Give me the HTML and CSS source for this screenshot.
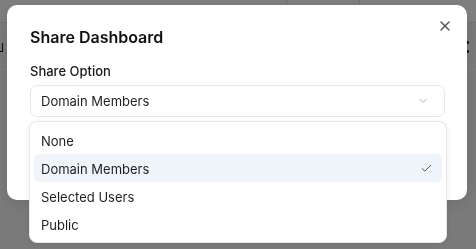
FILE: index.html
```html
<!DOCTYPE html>
<html lang="en">
<head>
    <meta charset="UTF-8">
    <meta name="viewport" content="width=device-width, initial-scale=1.0">
    <title>Share Dashboard</title>
    <link rel="stylesheet" href="styles.css">
</head>
<body>
    <!-- page behind the dialog -->
    <div class="page">
        <div class="page-header">
            <div class="page-cell wide"></div>
            <div class="page-cell"></div>
            <div class="page-cell"></div>
        </div>
        <div class="page-row">
            <span class="page-icon"></span>
            <span class="page-dots"><i></i><i></i></span>
        </div>
    </div>

    <div class="overlay">
        <div class="modal">
            <button class="close-btn" aria-label="Close">
                <svg width="16" height="16" viewBox="0 0 24 24" fill="none" stroke="currentColor" stroke-width="2" stroke-linecap="round" stroke-linejoin="round">
                    <path d="M18 6 6 18"/>
                    <path d="m6 6 12 12"/>
                </svg>
            </button>
            <h2 class="modal-title">Share Dashboard</h2>
            <label class="field-label">Share Option</label>
            <div class="select">
                <div class="select-trigger">
                    <span>Domain Members</span>
                    <svg class="chevron" width="12" height="12" viewBox="0 0 24 24" fill="none" stroke="currentColor" stroke-width="1.8" stroke-linecap="round" stroke-linejoin="round">
                        <path d="m6 9 6 6 6-6"/>
                    </svg>
                </div>
                <ul class="select-menu">
                    <li class="select-item">None</li>
                    <li class="select-item selected">
                        Domain Members
                        <svg class="check" width="13" height="13" viewBox="0 0 24 24" fill="none" stroke="currentColor" stroke-width="1.8" stroke-linecap="round" stroke-linejoin="round">
                            <path d="M20 6 9 17l-5-5"/>
                        </svg>
                    </li>
                    <li class="select-item">Selected Users</li>
                    <li class="select-item">Public</li>
                </ul>
            </div>
        </div>
    </div>
</body>
</html>
```

FILE: styles.css
```css
*{
    box-sizing: border-box;
}

body{
    margin:0;
    padding:0;
    font-family: Inter, "Liberation Sans", sans-serif;
    color:#18181b;
    background:#f4f4f5;
    height:249px;
    overflow:hidden;
}

/* background page */
.page-header{
    display:flex;
    height:23px;
    background:#fff;
    border-bottom:1px solid #e4e4e7;
}

.page-cell{
    width:73px;
    border-left:1px solid #e4e4e7;
}

.page-cell.wide{
    width:286px;
    border-left:none;
}

.page-row{
    display:flex;
    justify-content: space-between;
    align-items: center;
    height:47px;
    border-bottom:1px solid #fff;
}

.page-icon{
    width:3px;
    height:9px;
    margin-top:2px;
    border-right:1.5px solid #111;
    border-bottom:1.5px solid #111;
}

.page-dots{
    display:flex;
    flex-direction: column;
    gap:6px;
    margin-right:7px;
    margin-top:2px;
}

.page-dots i{
    width:3px;
    height:3px;
    border-radius:50%;
    background:#111;
}

/* dialog */
.overlay{
    position:fixed;
    inset:0;
    background:rgba(0,0,0,.5);
    padding:5px 9px 0 7px;
}

.modal{
    position:relative;
    height:195px;
    background:#fff;
    border-radius:10px;
    padding:20px 22px 0 23px;
    box-shadow:0 4px 16px rgba(0,0,0,.1);
}

.close-btn{
    position:absolute;
    top:13px;
    right:14px;
    padding:0;
    border:none;
    background:transparent;
    color:#52525b;
    display:flex;
}

.modal-title{
    margin:0 0 12px;
    font-size:16px;
    line-height:24px;
    font-weight:600;
    color:#111;
}

.field-label{
    display:block;
    font-size:13px;
    line-height:20px;
    font-weight:500;
    margin-bottom:4px;
}

.select{
    position:relative;
}

.select-trigger{
    display:flex;
    justify-content: space-between;
    align-items: center;
    height:32px;
    padding:0 15px 0 10px;
    border:1px solid #e7e7ea;
    border-radius:7px;
    font-size:13px;
    color:#1f1f23;
}

.chevron{
    color:#a1a1aa;
}

.select-menu{
    position:absolute;
    top:36px;
    left:-1px;
    width:418px;
    margin:0;
    padding:4px;
    list-style:none;
    background:#fff;
    border:1px solid #e7e7ea;
    border-radius:8px;
    box-shadow:0 2px 6px rgba(0,0,0,.08);
}

.select-item{
    display:flex;
    justify-content: space-between;
    align-items: center;
    height:28px;
    padding:1px 9px 0 7px;
    border-radius:5px;
    font-size:13px;
    color:#1f1f23;
}

.select-item.selected{
    background:#eef4f9;
}

.check{
    color:#52525b;
}
```
